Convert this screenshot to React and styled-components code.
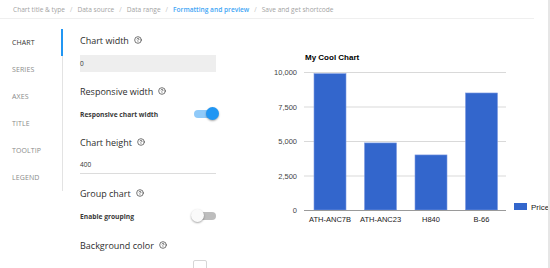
import React from 'react';
import styled, { createGlobalStyle } from 'styled-components';
import { CircleHelp } from 'lucide-react';

const blueC = '#2196f3';
const textC = '#333';
const mutedC = '#8a8a8a';
const lineC = '#e3e3e3';
const barC = '#3366cc';

const GlobalStyle = createGlobalStyle`
    html, body {
        margin: 0;
        padding: 0;
        background: #fff;
        font-family: "Open Sans", "Noto Sans", sans-serif;
        color: ${textC};
    }
`;

const Page = styled.div`
    width: 548px;
    height: 268px;
    border-right: 2px solid #e6e6e6;
    overflow: hidden;
`;

const Crumbs = styled.nav`
    display: flex;
    align-items: center;
    height: 18px;
    margin-right: 14px;
    padding-left: 13px;
    border-bottom: 1px solid #efefef;
    font-size: 6.6px;
    color: #a3a3a3;
`;

const Crumb = styled.span`
    color: ${(p) => (p.active ? '#42a5f5' : '#a3a3a3')};
    font-weight: ${(p) => (p.active ? 600 : 400)};
`;

const Sep = styled.span`
    margin: 0 5px;
    color: #c2c2c2;
`;

const Main = styled.div`
    display: flex;
    align-items: flex-start;
    margin-top: 10px;
`;

const Tabs = styled.ul`
    list-style: none;
    margin: 0;
    padding: 0;
    width: 62px;
    border-right: 1px solid ${lineC};
`;

const Tab = styled.li`
    position: relative;
    height: 27px;
    line-height: 27px;
    padding-left: 12px;
    font-size: 7px;
    letter-spacing: 0.1px;
    color: ${(p) => (p.active ? textC : mutedC)};

    &::after {
        content: '';
        display: ${(p) => (p.active ? 'block' : 'none')};
        position: absolute;
        top: 0;
        right: -1px;
        width: 2px;
        height: 100%;
        background: ${blueC};
    }
`;

const Form = styled.div`
    width: 139px;
    margin-left: 17px;
    padding-top: 4px;
`;

const Field = styled.div`
    margin-bottom: ${(p) => p.gap || 12}px;
`;

const Label = styled.div`
    display: flex;
    align-items: center;
    gap: 5px;
    height: 14px;
    margin-bottom: 8px;
    font-size: 9px;
    color: #2e2e2e;
`;

const FilledInput = styled.div`
    width: 136px;
    height: 17px;
    line-height: 17px;
    background: #eeeeee;
    font-size: 6.5px;
`;

const LineInput = styled.div`
    width: 136px;
    height: 16px;
    line-height: 16px;
    border-bottom: 1px solid #dcdcdc;
    font-size: 6.5px;
`;

const SwitchRow = styled.div`
    display: flex;
    align-items: center;
    justify-content: space-between;
    height: 16px;
    font-size: 6.7px;
    font-weight: 700;
    color: #3a3a3a;
`;

const Switch = styled.div`
    position: relative;
    width: 28px;
    height: 14px;
`;

const Track = styled.div`
    position: absolute;
    left: 3px;
    top: 3px;
    width: 22px;
    height: 8px;
    border-radius: 4px;
    background: ${(p) => (p.on ? '#90caf9' : '#bdbdbd')};
`;

const Knob = styled.div`
    position: absolute;
    top: 0;
    left: ${(p) => (p.on ? 15 : 0)}px;
    width: 13px;
    height: 13px;
    border-radius: 50%;
    background: ${(p) => (p.on ? blueC : '#fafafa')};
    box-shadow: 0 1px 2px rgba(0, 0, 0, 0.35);
`;

const ColorBox = styled.div`
    width: 12px;
    height: 12px;
    margin-left: 113px;
    border: 1px solid #d6d6d6;
    border-radius: 2px;
`;

const ChartPanel = styled.div`
    margin-left: 51px;
    margin-top: 11px;
`;

const ChartSvg = styled.svg`
    display: block;
    font-family: "Liberation Sans", Arial, sans-serif;
`;

function Help() {
    return <CircleHelp size={8} strokeWidth={2.2} color="#444" />;
}

function Toggle({ on }) {
    return (
        <Switch>
            <Track on={on} />
            <Knob on={on} />
        </Switch>
    );
}

const steps = ['Chart title & type', 'Data source', 'Data range', 'Formatting and preview', 'Save and get shortcode'];
const tabs = ['CHART', 'SERIES', 'AXES', 'TITLE', 'TOOLTIP', 'LEGEND'];
const bars = [
    { name: 'ATH-ANC7B', value: 9880 },
    { name: 'ATH-ANC23', value: 4860 },
    { name: 'H840', value: 3990 },
    { name: 'B-66', value: 8480 },
];
const ticks = [10000, 7500, 5000, 2500, 0];

// chart geometry in page pixels
const base = 210;
const top = 72;
const yOf = (v) => base - ((base - top) * v) / 10000;

function Chart() {
    return (
        <ChartSvg width="278" height="200" viewBox="270 40 278 200">
            <text x="305" y="60" fontSize="8" fontWeight="700" fill="#000">My Cool Chart</text>
            {ticks.map((t) => (
                <g key={t}>
                    {t > 0 && <line x1="304" x2="506" y1={yOf(t) + 0.5} y2={yOf(t) + 0.5} stroke="#d9d9d9" />}
                    <text x="297" y={yOf(t) + 3} fontSize="7.5" fill="#444" textAnchor="end">
                        {t.toLocaleString('en-US')}
                    </text>
                </g>
            ))}
            {bars.map((b, i) => {
                const x = 314 + i * 50.5;
                const y = yOf(b.value);
                return (
                    <g key={b.name}>
                        <rect x={x} y={y} width="32" height={base - y} fill={barC} stroke="#7d9ae0" strokeWidth="0.6" />
                        <text x={x + 16} y="222" fontSize="7.5" fill="#222" textAnchor="middle">{b.name}</text>
                    </g>
                );
            })}
            <line x1="304" x2="506" y1={base + 0.5} y2={base + 0.5} stroke="#9a9a9a" />
            <rect x="514" y="203" width="13" height="7" fill={barC} />
            <text x="531" y="209.5" fontSize="8" fill="#222">Price</text>
        </ChartSvg>
    );
}

export default function App() {
    return (
        <Page>
            <GlobalStyle />
            <Crumbs>
                {steps.map((s, i) => (
                    <React.Fragment key={s}>
                        {i > 0 && <Sep>/</Sep>}
                        <Crumb active={i === 3}>{s}</Crumb>
                    </React.Fragment>
                ))}
            </Crumbs>
            <Main>
                <Tabs>
                    {tabs.map((t, i) => (
                        <Tab key={t} active={i === 0}>{t}</Tab>
                    ))}
                </Tabs>
                <Form>
                    <Field>
                        <Label>Chart width <Help /></Label>
                        <FilledInput>0</FilledInput>
                    </Field>
                    <Field gap={13}>
                        <Label>Responsive width <Help /></Label>
                        <SwitchRow>Responsive chart width <Toggle on /></SwitchRow>
                    </Field>
                    <Field>
                        <Label>Chart height <Help /></Label>
                        <LineInput>400</LineInput>
                    </Field>
                    <Field gap={14}>
                        <Label>Group chart <Help /></Label>
                        <SwitchRow>Enable grouping <Toggle /></SwitchRow>
                    </Field>
                    <Field>
                        <Label>Background color <Help /></Label>
                        <ColorBox />
                    </Field>
                </Form>
                <ChartPanel>
                    <Chart />
                </ChartPanel>
            </Main>
        </Page>
    );
}
